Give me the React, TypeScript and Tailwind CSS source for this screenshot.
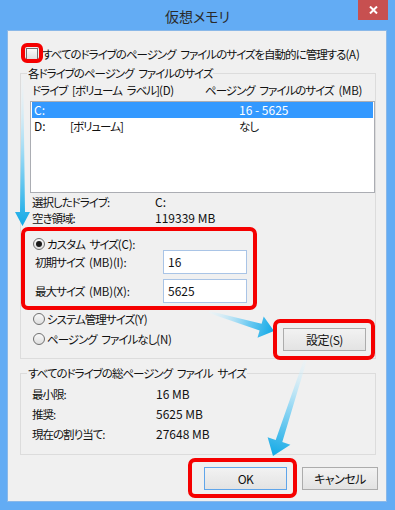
import React from "react";

const jp =
  "font-['Noto_Sans_CJK_JP','Noto_Sans',sans-serif] [font-feature-settings:'palt'] tracking-[-1px] whitespace-nowrap";
const num = "text-[12px] tracking-normal";
const lat = "tracking-[-0.2px]";

const Radio = ({ checked }: { checked?: boolean }) => (
  <span className="flex h-[12px] w-[12px] items-center justify-center rounded-full border border-[#707070] bg-gradient-to-b from-[#f8f8f8] to-[#dedede]">
    {checked && <span className="h-[6px] w-[6px] rounded-full bg-[#1a1a1a]" />}
  </span>
);

const Button = ({ label, primary, w }: { label: string; primary?: boolean; w: string }) => (
  <button
    className={`${w} flex h-[23px] items-center justify-center border bg-gradient-to-b from-[#f2f2f2] to-[#e3e3e3] text-[12px] tracking-[-0.5px] text-[#111] ${
      primary ? "border-[#5fa5ea]" : "border-[#acacac]"
    }`}
  >
    {label}
  </button>
);

const Annotations = () => (
  <svg className="pointer-events-none absolute inset-0" width="395" height="510" viewBox="0 0 395 510">
    <defs>
      <linearGradient id="a1" gradientUnits="userSpaceOnUse" x1="22" y1="78" x2="22" y2="226">
        <stop offset="0" stopColor="#e8f7fd" stopOpacity="0.2" />
        <stop offset="0.55" stopColor="#8fd6f4" />
        <stop offset="1" stopColor="#12a9e6" />
      </linearGradient>
      <linearGradient id="a2" gradientUnits="userSpaceOnUse" x1="209" y1="312" x2="274" y2="331">
        <stop offset="0" stopColor="#e8f7fd" stopOpacity="0.3" />
        <stop offset="0.6" stopColor="#6fcbf2" />
        <stop offset="1" stopColor="#12a9e6" />
      </linearGradient>
      <linearGradient id="a3" gradientUnits="userSpaceOnUse" x1="306" y1="358" x2="273" y2="456">
        <stop offset="0" stopColor="#e8f7fd" stopOpacity="0.2" />
        <stop offset="0.5" stopColor="#95d8f4" />
        <stop offset="1" stopColor="#12a9e6" />
      </linearGradient>
    </defs>
    <polygon fill="url(#a1)" points="21.7,78 23.3,78 25,212 30,212 22.5,226 15,212 20,212" />
    <polygon fill="url(#a2)" points="209.3,311 261.6,323.7 263.7,316.5 274,331 257.5,337.7 259.6,330.5 208.7,313" />
    <polygon
      fill="url(#a3)"
      points="304.6,357.5 307.4,358.5 282.3,442.1 290.4,444.7 273,456 267.6,437.3 275.7,439.9"
    />
    <g fill="none" stroke="#f50000" strokeWidth="4">
      <rect x="23" y="45" width="18" height="16" rx="4" />
      <rect x="23" y="229" width="232" height="79" rx="5" />
      <rect x="275" y="321" width="98" height="37" rx="5" />
      <rect x="190" y="460" width="105" height="36" rx="5" />
    </g>
  </svg>
);

export default function App() {
  return (
    <div className={`relative h-[510px] w-[395px] overflow-hidden bg-[#63acf4] text-[11.5px] leading-[14px] text-[#111] ${jp}`}>
      {/* title bar */}
      <div className="flex h-[30px] items-center justify-center pt-[1px] text-[14px] tracking-normal text-[#2a2a2a]">仮想メモリ</div>
      <div className="absolute right-[7px] top-0 flex h-[20px] w-[30px] items-center justify-center bg-[#c75050]">
        <svg width="9" height="8" viewBox="0 0 9 8">
          <path d="M1 0.5 L8 7.5 M8 0.5 L1 7.5" stroke="#fff" strokeWidth="2" />
        </svg>
      </div>

      {/* client area */}
      <div className="ml-[7px] flex h-[472px] w-[380px] flex-col border border-[#8ab8e8] bg-[#f0f0f0]">
        <div className="ml-[18px] mt-[16px] flex h-[14px] items-center gap-[4px]">
          <span className="h-[12px] w-[12px] border border-[#707070] bg-gradient-to-b from-[#fbfbfb] to-[#e0e0e0]" />
          <span>
            すべてのドライブのページング{"\u2002"}ファイルのサイズを自動的に管理する<span className={lat}>(A)</span>
          </span>
        </div>

        {/* per-drive group */}
        <fieldset className="ml-[12px] mt-[5px] w-[356px] border border-[#dcdcdc] pb-[7px]">
          <legend className="ml-[6px] px-[1px] leading-[14px]">各ドライブのページング{"\u2002"}ファイルのサイズ</legend>
          <div className="ml-[11px] mt-[3px] flex h-[14px] items-center">
            <span className="w-[173px]">
              ドライブ{"\u2002"}[ボリューム{"\u2002"}ラベル]<span className={lat}>(D)</span>
            </span>
            <span>
              ページング{"\u2002"}ファイルのサイズ{"\u2002"}<span className={lat}>(MB)</span>
            </span>
          </div>
          <div className="ml-[9px] mt-[4px] h-[92px] w-[345px] border border-[#abadb3] bg-white px-[1px]">
            <div className="flex h-[16px] items-center bg-[#3399ff] pl-[2px] text-white">
              <span className={`w-[205px] ${num}`}>C:</span>
              <span className={num}>16 - 5625</span>
            </div>
            <div className="flex h-[16px] items-center pl-[2px]">
              <span className={`w-[36px] ${num}`}>D:</span>
              <span className="w-[169px]">[ボリューム]</span>
              <span>なし</span>
            </div>
          </div>
          <div className="ml-[11px] mt-[1px] flex h-[16px] items-center">
            <span className="w-[123px]">選択したドライブ:</span>
            <span className={num}>C:</span>
          </div>
          <div className="ml-[11px] flex h-[16px] items-center">
            <span className="w-[123px]">空き領域:</span>
            <span className={num}>119339 MB</span>
          </div>

          <div className="ml-[12px] mt-[11px] flex h-[13px] items-center gap-[2px]">
            <Radio checked />
            <span>
              カスタム{"\u2002"}サイズ<span className={lat}>(C):</span>
            </span>
          </div>
          <div className="ml-[14px] flex h-[24px] items-center">
            <span className="w-[128px]">
              初期サイズ{"\u2002"}<span className={lat}>(MB)(I):</span>
            </span>
            <div className={`flex h-[24px] w-[84px] items-center border border-[#a9c4e6] bg-white pl-[4px] ${num}`}>16</div>
          </div>
          <div className="ml-[14px] mt-[5px] flex h-[24px] items-center">
            <span className="w-[128px]">
              最大サイズ{"\u2002"}<span className={lat}>(MB)(X):</span>
            </span>
            <div className={`flex h-[24px] w-[84px] items-center border border-[#a9c4e6] bg-white pl-[4px] ${num}`}>5625</div>
          </div>

          <div className="mt-[6px] flex justify-between pr-[9px]">
            <div className="ml-[12px] flex flex-col">
              <div className="flex h-[20px] items-center gap-[2px]">
                <Radio />
                <span>
                  システム管理サイズ<span className={lat}>(Y)</span>
                </span>
              </div>
              <div className="flex h-[20px] items-center gap-[2px]">
                <Radio />
                <span>
                  ページング{"\u2002"}ファイルなし<span className={lat}>(N)</span>
                </span>
              </div>
            </div>
            <div className="mt-[19px]">
              <Button label="設定(S)" w="w-[83px]" />
            </div>
          </div>
        </fieldset>

        {/* totals group */}
        <fieldset className="ml-[12px] mt-[7px] w-[356px] border border-[#dcdcdc] pb-[10px]">
          <legend className="ml-[6px] px-[1px] leading-[14px]">
            すべてのドライブの総ページング{"\u2002"}ファイル{"\u2002"}サイズ
          </legend>
          <div className="ml-[11px] mt-[4px] flex flex-col">
            <div className="flex h-[20px] items-center">
              <span className="w-[124px]">最小限:</span>
              <span className={num}>16 MB</span>
            </div>
            <div className="flex h-[20px] items-center">
              <span className="w-[124px]">推奨:</span>
              <span className={num}>5625 MB</span>
            </div>
            <div className="flex h-[20px] items-center">
              <span className="w-[124px]">現在の割り当て:</span>
              <span className={num}>27648 MB</span>
            </div>
          </div>
        </fieldset>

        <div className="mr-[8px] mt-[12px] flex justify-end gap-[15px]">
          <Button label="OK" primary w="w-[83px]" />
          <Button label="キャンセル" w="w-[76px]" />
        </div>
      </div>

      <Annotations />
    </div>
  );
}
